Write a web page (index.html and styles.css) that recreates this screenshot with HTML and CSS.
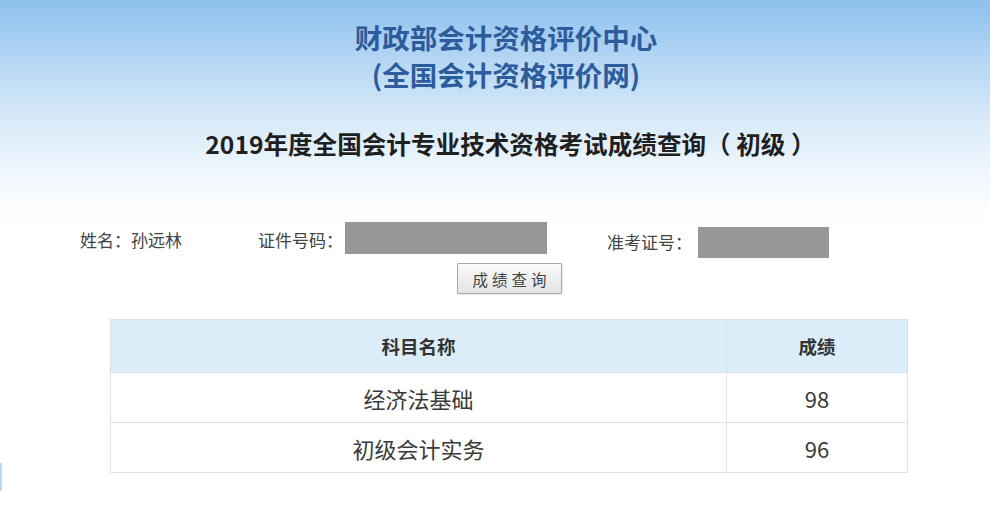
FILE: index.html
```html
<!DOCTYPE html>
<html lang="zh-CN">
<head>
<meta charset="utf-8">
<title>成绩查询</title>
<link rel="stylesheet" href="styles.css">
</head>
<body>
<div class="page">
  <header class="top">
    <h1 class="org">财政部会计资格评价中心</h1>
    <h1 class="org">(全国会计资格评价网)</h1>
    <h2 class="exam">2019年度全国会计专业技术资格考试成绩查询（ 初级 ）</h2>
  </header>
  <div class="info">
    <div class="field name">姓名：孙远林</div>
    <div class="field id"><span class="label">证件号码：</span><span class="mask mask-id"></span></div>
    <div class="field ticket"><span class="label">准考证号：</span><span class="mask mask-ticket"></span></div>
  </div>
  <div class="actions">
    <button class="btn" type="button">成绩查询</button>
  </div>
  <table class="scores">
    <thead>
      <tr><th class="c-name">科目名称</th><th class="c-score">成绩</th></tr>
    </thead>
    <tbody>
      <tr><td>经济法基础</td><td>98</td></tr>
      <tr><td>初级会计实务</td><td>96</td></tr>
    </tbody>
  </table>
  <div class="edge"></div>
</div>
</body>
</html>
```
FILE: styles.css
```css
html, body {
  margin: 0;
  padding: 0;
}
body {
  width: 990px;
  height: 517px;
  overflow: hidden;
  font-family: "Noto Sans CJK SC", "Noto Sans", sans-serif;
  background: linear-gradient(to bottom, #8dc0ee 0px, #b5d6f4 60px, #d8eaf9 120px, #eef6fd 170px, #fbfdff 205px, #ffffff 230px);
  color: #333;
}
.page {
  position: relative;
  height: 517px;
}
.top {
  padding-top: 19px;
  text-align: center;
}
.org {
  margin: 0;
  font-size: 27.5px;
  line-height: 37px;
  font-weight: 700;
  color: #2c5c9c;
  padding-left: 22px;
}
.exam {
  margin: 34px 0 0 0;
  font-size: 24.6px;
  line-height: 32px;
  font-weight: 700;
  color: #1f1f1f;
  padding-left: 31px;
  white-space: pre;
}
.info {
  display: flex;
  align-items: flex-start;
  margin-top: 63px;
  padding-left: 80px;
  font-size: 17px;
  color: #444;
  white-space: nowrap;
}
.field {
  display: flex;
  align-items: flex-start;
  line-height: 24px;
  flex: none;
}
.name {
  width: 178px;
  padding-top: 6px;
}
.label {
  flex: none;
}
.id .label {
  width: 87px;
  padding-top: 6px;
}
.ticket {
  margin-left: 60px;
}
.ticket .label {
  width: 91px;
  padding-top: 8px;
}
.mask {
  display: block;
  flex: none;
  background: #979797;
}
.mask-id {
  width: 202px;
  height: 32px;
}
.mask-ticket {
  width: 131px;
  height: 31px;
  margin-top: 5px;
}
.actions {
  padding-left: 457px;
  margin-top: 5px;
}
.btn {
  width: 105px;
  height: 31px;
  border: 1px solid #a9a9a9;
  border-radius: 1px;
  background: linear-gradient(to bottom, #fafafa, #e4e4e4);
  font-family: "Noto Sans CJK SC", sans-serif;
  font-size: 15.5px;
  letter-spacing: 4px;
  color: #444;
  padding: 0 0 0 4px;
  box-shadow: 1px 1px 1px rgba(0,0,0,0.08);
}
.scores {
  margin-top: 25px;
  margin-left: 110px;
  width: 798px;
  border-collapse: collapse;
  border: 1px solid #e2e6ea;
}
.scores th, .scores td {
  text-align: center;
  border: 1px solid #e0e3e6;
  padding: 0;
}
.scores th {
  height: 52px;
  background: #daedf8;
  font-size: 18.5px;
  font-weight: 700;
  color: #333;
  border-color: #d2e3ee;
}
.scores td {
  height: 49px;
  font-size: 22px;
  color: #3a3a3a;
  background: #fff;
}
.c-name {
  width: 615px;
}
.edge {
  position: absolute;
  left: 0;
  top: 463px;
  width: 2px;
  height: 28px;
  background: #bcd8f2;
}
```
